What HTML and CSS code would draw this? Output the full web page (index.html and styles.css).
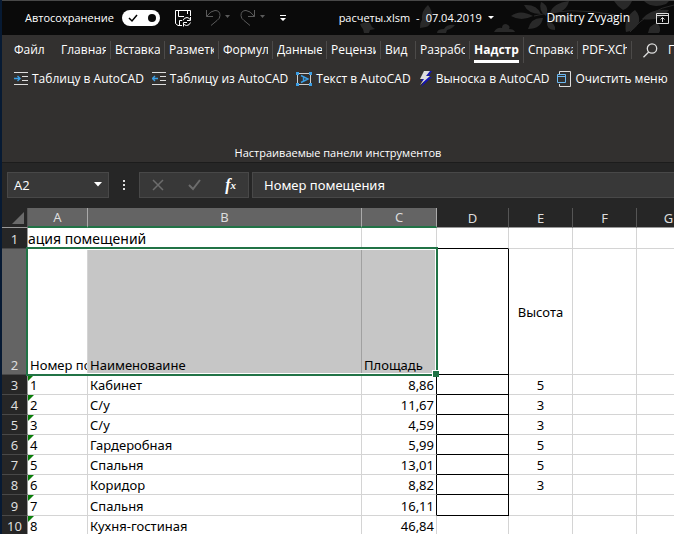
FILE: index.html
```html
<!DOCTYPE html>
<html lang="ru">
<head>
  <meta charset="UTF-8">
  <meta name="viewport" content="width=device-width, initial-scale=1.0">
  <title>расчеты.xlsm</title>
  <link rel="stylesheet" href="styles.css">
</head>
<body>
  <div class="window">
    <header class="titlebar">
      <svg class="leaves" width="330" height="33" viewBox="0 0 330 33" fill="#292929" stroke="#292929">
        <path d="M16 23q6-3 10-1l2 4 3 2-5 1-1 3h-5l-1-4q-2-2-3-5z" stroke="none"></path>
        <path d="M84 4q5 6 4 14q-2 7-6 8l-6 1q0-6 2-8q-1-9 6-15z" stroke="none"></path>
        <path d="M93 32q0-4 7-4q3-5 11-4q-3 4-8 5l-1 3z" stroke="none"></path>
        <path d="M150 31q3-5 8-4q0-4 4-4q5 2 3 5q5 0 6 3z" stroke="none"></path>
        <path d="M167 15q9-7 22 0q-12 6-22 0zM180 4q13-1 17 9q-13 0-17-9zM197 1q9 4 5 14q-8-5-5-14zM206 12q3-10 19-12q-3 13-19 12zM204 18q10-8 25 0q-14 7-25 0zM184 28q3-12 15-11q-2 11-15 11zM203 20q9 2 8 9q-9 0-8-9z" stroke="none"></path>
        <path d="M190 15q34-10 82-1" fill="none"></path>
        <path d="M270 0h18q-3 7-9 9q-6-4-9-9zM291 9q5 5 4 12q-4 9-13 10q-3-14 9-22zM298 18q9-11 27-9q-8 12-27 9zM300 0q8 8 22 3l3-3zM304 32q1-8 9-10q5 5 2 10z" stroke="none"></path>
        <path d="M286 31Q306 8 330 4" fill="none"></path>
      </svg>
      <span class="autosave-label" id="autosave-label">Автосохранение</span>
      <button class="toggle" aria-labelledby="autosave-label">
        <svg width="38" height="16" viewBox="0 0 38 16">
          <rect width="38" height="16" rx="8" fill="#fff"></rect>
          <path d="M7 8l3 3 5-6" fill="none" stroke="#000" stroke-width="1.5"></path>
          <circle cx="30" cy="8" r="4" fill="#0a0a0a"></circle>
        </svg>
      </button>
      <button class="save" aria-label="Сохранить">
        <svg width="17" height="17" viewBox="0 0 17 17" fill="none" stroke="#fff">
          <path d="M7 15.500H3L.5 13.500V.5H15.500V6M3.500.5V6.500H9M12.500.5V4M4.500 15V10.500H7"></path>
          <path d="M8 10.500q1-3 4-3q2 0 3.500 2.500M15.500 7V10.500H12M15.500 12.500q-1 3-4 3q-2 0-3.500-2.500M8.500 16.500V12.500H12"></path>
        </svg>
      </button>
      <button class="undo" aria-label="Отменить">
        <svg width="26" height="18" viewBox="0 0 26 18" fill="none" stroke="#5a5a5a">
          <path d="M1.500 1v6.500H8M1.500 7.500Q6 1.500 10 1.500q5 0 5 5q0 3-3 5l-6 5"></path>
          <path d="M20 6h5l-2.500 3z" fill="#5a5a5a" stroke="none"></path>
        </svg>
      </button>
      <button class="redo" aria-label="Вернуть">
        <svg width="26" height="18" viewBox="0 0 26 18" fill="none" stroke="#5a5a5a">
          <path d="M14.500 1v6.500H8M14.500 7.500Q10 1.500 6 1.500q-5 0-5 5q0 3 3 5l6 5"></path>
          <path d="M20 6h5l-2.500 3z" fill="#5a5a5a" stroke="none"></path>
        </svg>
      </button>
      <button class="more" aria-label="Настройка панели">
        <svg width="6" height="8" viewBox="0 0 6 8" fill="#fff">
          <path d="M0 1h6v1H0zM0 4h6L3 7z"></path>
        </svg>
      </button>
      <button class="file-name">
        <span>расчеты.xlsm</span><span>-</span><span>07.04.2019</span>
        <svg width="6" height="4" viewBox="0 0 6 4" fill="#fff"><path d="M0 0h6L3 3z"></path></svg>
      </button>
      <span class="user">Dmitry Zvyagin</span>
      <button class="ribbon-options" aria-label="Параметры ленты">
        <svg width="13" height="11" viewBox="0 0 13 11" fill="none" stroke="#ddd">
          <path d="M.5.5h12v10H.5zM.5 2.500h12M6.500 9V4.500M4.500 6.500l2-2 2 2"></path>
        </svg>
      </button>
    </header>

    <div class="ribbon">
      <nav class="tabs">
        <a class="tab file" href="#">Файл</a>
        <a class="tab" href="#"><span>Главная</span></a>
        <a class="tab" href="#"><span>Вставка</span></a>
        <a class="tab" href="#"><span>Разметк</span></a>
        <a class="tab" href="#"><span>Формул</span></a>
        <a class="tab" href="#"><span>Данные</span></a>
        <a class="tab" href="#"><span>Рецензи</span></a>
        <a class="tab short" href="#"><span>Вид</span></a>
        <a class="tab" href="#"><span>Разрабо</span></a>
        <a class="tab active" href="#"><span>Надстр</span></a>
        <a class="tab" href="#"><span>Справка</span></a>
        <a class="tab" href="#"><span>PDF-XCh</span></a>
        <a class="search" href="#">
          <svg width="15" height="15" viewBox="0 0 15 15" fill="none" stroke="#ddd" stroke-width="1.300">
            <circle cx="9" cy="5.500" r="4.700"></circle>
            <path d="M5.700 9L.5 14.300"></path>
          </svg>
          П
        </a>
      </nav>
      <div class="commands">
        <button class="command">
          <svg width="14" height="14" viewBox="0 0 14 14" fill="none" stroke="#ddd">
            <path d="M0 .5h14M8 4.500h6M8 8.500h6M0 12.500h14"></path>
            <path d="M0 6.500h6M3.500 4l2.500 2.500L3.500 9" stroke="#3a9ee5" stroke-width="1.400"></path>
          </svg>
          Таблицу в AutoCAD
        </button>
        <button class="command">
          <svg width="14" height="14" viewBox="0 0 14 14" fill="none" stroke="#ddd">
            <path d="M0 .5h14M8 4.500h6M8 8.500h6M0 12.500h14"></path>
            <path d="M.5 6.500h5.500M3 4L.5 6.500 3 9" stroke="#3a9ee5" stroke-width="1.400"></path>
          </svg>
          Таблицу из AutoCAD
        </button>
        <button class="command">
          <svg width="16" height="14" viewBox="0 0 16 14" fill="none">
            <path d="M1.500 1v12M14.500 1v12M2 1.500h12M2 12.500h12" stroke="#ccc"></path>
            <path d="M0 0h3v3H0zM13 0h3v3h-3zM0 11h3v3H0zM13 11h3v3h-3z" fill="#3a9ee5"></path>
            <path d="M5 3.500l7 3.500-7 3.500M7.500 4.500v5" stroke="#3a9ee5" stroke-width="1.400"></path>
          </svg>
          Текст в AutoCAD
        </button>
        <button class="command">
          <svg width="13" height="16" viewBox="0 0 13 16">
            <path d="M7 0h6L9 6h4L2 16l3-6H2z" fill="#1515b0"></path>
            <path d="M5 0h6L7 5h4L1 14l4-6H1z" fill="#ddd"></path>
          </svg>
          Выноска в AutoCAD
        </button>
        <button class="command">
          <svg width="14" height="16" viewBox="0 0 14 16" fill="none">
            <path d="M2.500 3V.5h11v15h-11V13" stroke="#ddd"></path>
            <path d="M.5 3.500h8v8h-8zM.5 5.500h8" stroke="#6cb8f0"></path>
          </svg>
          Очистить меню
        </button>
      </div>
      <div class="group-label">Настраиваемые панели инструментов</div>
    </div>

    <div class="formula-bar">
      <button class="name-box">A2
        <svg width="8" height="5" viewBox="0 0 8 5" fill="#fff"><path d="M0 0h8L4 4.500z"></path></svg>
      </button>
      <svg class="dots" width="2" height="10" viewBox="0 0 2 10" fill="#ddd"><path d="M0 0h2v2H0zM0 4h2v2H0zM0 8h2v2H0z"></path></svg>
      <div class="formula-tools">
        <button aria-label="Отмена">
          <svg width="12" height="12" viewBox="0 0 12 12" stroke="#6c6c6c" stroke-width="1.500"><path d="M1 1l10 10M11 1L1 11"></path></svg>
        </button>
        <button aria-label="Ввод">
          <svg width="13" height="12" viewBox="0 0 13 12" fill="none" stroke="#6c6c6c" stroke-width="2"><path d="M1 6l4 4 7-9"></path></svg>
        </button>
        <button class="fx" aria-label="Вставить функцию">f<small>x</small></button>
      </div>
      <input class="formula-input" aria-label="Строка формул" value="Номер помещения">
    </div>

    <table class="sheet">
      <colgroup>
        <col class="col-row"><col class="col-a"><col class="col-b"><col class="col-c"><col class="col-d"><col class="col-e"><col class="col-e"><col class="col-e">
      </colgroup>
      <thead>
        <tr>
          <th class="corner"><svg width="12" height="12" viewBox="0 0 12 12" fill="#6a6a6a"><path d="M12 0v12H0z"></path></svg></th>
          <th class="picked">A</th><th class="picked">B</th><th class="picked">C</th><th>D</th><th>E</th><th>F</th><th>G</th>
        </tr>
      </thead>
      <tbody>
        <tr class="title-row"><th>1</th><td class="title" colspan="2">ация помещений</td><td></td><td class="above-box"></td><td></td><td></td><td></td></tr>
        <tr class="head-row"><th class="picked">2</th><td class="current"><div class="clip">Номер по</div><div class="selection"></div></td><td class="shade">Наименоваине</td><td class="shade">Площадь</td><td class="box"></td><td class="middle">Высота</td><td></td><td></td></tr>
        <tr><th>3</th><td class="flag">1</td><td>Кабинет</td><td class="num">8,86</td><td class="box"></td><td class="center">5</td><td></td><td></td></tr>
        <tr><th>4</th><td class="flag">2</td><td>С/у</td><td class="num">11,67</td><td class="box"></td><td class="center">3</td><td></td><td></td></tr>
        <tr><th>5</th><td class="flag">3</td><td>С/у</td><td class="num">4,59</td><td class="box"></td><td class="center">3</td><td></td><td></td></tr>
        <tr><th>6</th><td class="flag">4</td><td>Гардеробная</td><td class="num">5,99</td><td class="box"></td><td class="center">5</td><td></td><td></td></tr>
        <tr><th>7</th><td class="flag">5</td><td>Спальня</td><td class="num">13,01</td><td class="box"></td><td class="center">5</td><td></td><td></td></tr>
        <tr><th>8</th><td class="flag">6</td><td>Коридор</td><td class="num">8,82</td><td class="box"></td><td class="center">3</td><td></td><td></td></tr>
        <tr class="tall"><th>9</th><td class="flag">7</td><td>Спальня</td><td class="num">16,11</td><td class="box"></td><td></td><td></td><td></td></tr>
        <tr><th>10</th><td class="flag">8</td><td>Кухня-гостиная</td><td class="num plain">46,84</td><td></td><td></td><td></td><td></td></tr>
      </tbody>
    </table>
  </div>
</body>
</html>
```
FILE: styles.css
```css
:root {
  --ribbon: #32302f;
  --chrome: #262626;
  --field: #383838;
  --field-border: #484848;
  --picked: #646464;
  --grid: #d4d4d4;
  --green: #217346;
  --ui-font: "Open Sans", "Noto Sans", sans-serif;
  --sheet-font: "Noto Sans", "Open Sans", sans-serif;
}

* {
  box-sizing: border-box;
}

body {
  margin: 0;
  height: 100vh;
  overflow: hidden;
  background: var(--chrome);
  color: #fff;
  font: 12px/16px var(--ui-font);
}

button {
  display: flex;
  align-items: center;
  padding: 0;
  border: 0;
  background: none;
  color: inherit;
  font: inherit;
}

a {
  color: inherit;
  text-decoration: none;
}

svg {
  flex: none;
}

.window {
  height: 100vh;
  overflow: hidden;
  border-left: 2px solid #071a33;
}

/* Title bar */
.titlebar {
  position: relative;
  display: flex;
  align-items: center;
  height: 35px;
  padding: 0 5px 0 23px;
  overflow: hidden;
  border-top: 1px solid #484848;
  background: #0a0a0a;
  font-size: 11px;
  white-space: nowrap;
}

.titlebar > * {
  position: relative;
}

.titlebar .leaves {
  position: absolute;
  top: 0;
  right: 0;
}

.autosave-label {
  min-width: 91px;
}

.toggle {
  margin-left: 6px;
}

.save {
  margin-left: 15px;
}

.undo {
  margin-left: 13px;
}

.redo {
  margin-left: 9px;
}

.more {
  margin-left: 14px;
}

.file-name {
  gap: 6px;
  margin: 0 auto;
}

.user {
  font-size: 12px;
}

.ribbon-options {
  margin-left: 26px;
}

/* Ribbon */
.ribbon {
  display: flex;
  flex-direction: column;
  height: 127px;
  background: var(--ribbon);
}

.tabs {
  display: flex;
  align-items: center;
  height: 30px;
  padding-left: 6px;
  overflow: hidden;
  line-height: 18px;
  white-space: nowrap;
}

.tab {
  flex: none;
  width: 54px;
  padding: 0 4px;
  border-right: 1px solid #4c4a49;
}

.tab span {
  display: block;
  overflow: hidden;
}

.tab.file {
  width: 49px;
  padding: 0 6px;
  border-right: 0;
}

.tab.short {
  width: 35px;
}

.tab.active {
  padding-top: 4px;
  font-weight: 700;
}

.tab.active span {
  padding-bottom: 1px;
  border-bottom: 3px solid #fff;
}

.search {
  display: flex;
  gap: 10px;
  align-items: center;
  margin-left: 11px;
}

.commands {
  display: flex;
  gap: 8px;
  padding: 6px 12px;
  white-space: nowrap;
}

.command {
  gap: 4px;
}

.group-label {
  margin-top: auto;
  padding-bottom: 1px;
  font-size: 11px;
  text-align: center;
}

/* Formula bar */
.formula-bar {
  display: flex;
  align-items: center;
  height: 46px;
  padding: 0 0 2px 5px;
  border-top: 1px solid #1c1c1c;
  font-size: 13px;
}

.name-box,
.formula-tools,
.formula-input {
  height: 26px;
  border: 1px solid var(--field-border);
  background: var(--field);
}

.name-box {
  justify-content: space-between;
  width: 102px;
  padding: 0 6px;
}

.dots {
  margin: 0 14px;
}

.formula-tools {
  display: flex;
  align-items: center;
  justify-content: space-between;
  width: 110px;
  padding: 0 12px;
}

.fx {
  font: italic 700 16px/16px "Liberation Serif", serif;
}

.fx small {
  font-size: 11px;
}

.formula-input {
  flex: 1;
  min-width: 0;
  margin-left: 3px;
  padding: 0 11px;
  border-right: 0;
  color: #fff;
  font: 13px/20px var(--sheet-font);
}

/* Sheet */
.sheet {
  width: 699px;
  table-layout: fixed;
  border-spacing: 0;
  background: #fff;
  color: #000;
  font: 13px/18px var(--sheet-font);
}

.col-row {
  width: 26px;
}

.col-a {
  width: 60px;
}

.col-b {
  width: 274px;
}

.col-c {
  width: 75px;
}

.col-d {
  width: 72px;
}

.col-e {
  width: 64px;
}

.sheet th {
  height: 20px;
  padding: 0;
  border-right: 1px solid #555;
  border-bottom: 1px solid #484848;
  background: var(--chrome);
  color: #ddd;
  font-weight: 400;
  vertical-align: bottom;
}

.sheet thead th {
  border-bottom: 1px solid #999;
}

.sheet th.picked {
  border-right-color: #aaa;
  background: var(--picked);
}

.sheet thead th.picked {
  border-bottom: 2px solid var(--green);
}

.sheet tbody th {
  border-right-color: #999;
}

.corner svg {
  display: block;
  margin: 0 3px 3px auto;
}

.sheet td {
  position: relative;
  height: 20px;
  padding: 0 2px;
  border-right: 1px solid var(--grid);
  border-bottom: 1px solid var(--grid);
  vertical-align: bottom;
  white-space: nowrap;
}

.sheet .title-row > * {
  height: 21px;
}

.sheet .head-row > * {
  height: 126px;
}

.sheet .tall > * {
  height: 21px;
}

.sheet td.title {
  padding: 0;
  font-size: 14px;
}

.sheet td.shade {
  border-right-color: #a0a0a0;
  background: #c6c6c6;
}

.clip {
  overflow: hidden;
  margin-right: -2px;
}

.sheet td.middle,
.sheet td.center {
  text-align: center;
}

.sheet td.middle {
  vertical-align: middle;
}

.sheet td.num {
  border-right-color: #000;
  text-align: right;
}

.sheet td.plain {
  border-right-color: var(--grid);
}

.sheet td.above-box {
  border-bottom-color: #000;
}

.sheet td.box {
  border-right-color: #000;
  border-bottom-color: #000;
}

/* Green corner of a number stored as text */
.flag::before {
  content: "";
  position: absolute;
  top: 0;
  left: 0;
  border-top: 6px solid #0a7d0a;
  border-right: 6px solid transparent;
}

/* Frame round A2:C2, starts in A2 and spans the three columns */
.selection {
  position: absolute;
  z-index: 1;
  top: -2px;
  left: -2px;
  width: 412px;
  height: 129px;
  border: 2px solid var(--green);
  box-shadow: inset 0 0 0 1px #fff;
}

.selection::after {
  content: "";
  position: absolute;
  right: -3px;
  bottom: -3px;
  width: 6px;
  height: 6px;
  border-top: 1px solid #fff;
  border-left: 1px solid #fff;
  background: var(--green);
}
```
